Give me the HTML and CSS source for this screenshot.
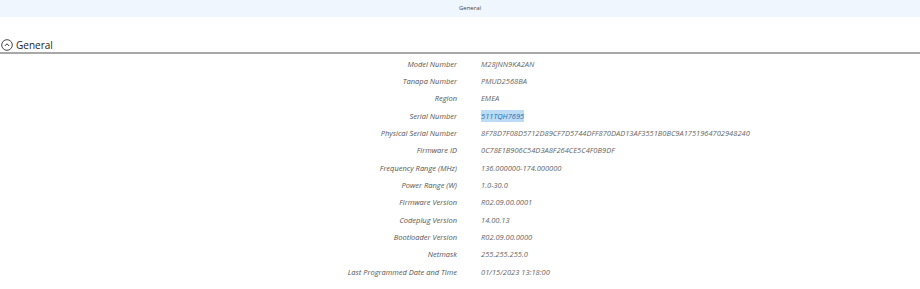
FILE: index.html
```html
<!DOCTYPE html>
<html lang="en">
<head>
    <meta charset="UTF-8">
    <title>General</title>
    <link rel="stylesheet" href="styles.css">
</head>
<body>
    <div class="tab-bar">General</div>

    <div class="section">
        <div class="section-header">
            <svg class="toggle" width="12" height="12" viewBox="0 0 12 12">
                <circle cx="6" cy="6" r="5.3" fill="none" stroke="#333" stroke-width="0.9"/>
                <path d="M3.8 7 L6 4.8 L8.2 7" fill="none" stroke="#333" stroke-width="1"/>
            </svg>
            <span>General</span>
        </div>

        <div class="info-grid">
            <div class="label">Model Number</div>
            <div class="value">M28JNN9KA2AN</div>
            <div class="label">Tanapa Number</div>
            <div class="value">PMUD2568BA</div>
            <div class="label">Region</div>
            <div class="value">EMEA</div>
            <div class="label">Serial Number</div>
            <div class="value"><span class="selected">511TQH7695</span></div>
            <div class="label">Physical Serial Number</div>
            <div class="value">8F78D7F08D5712D89CF7D5744DFF870DAD13AF3551B0BC9A1751964702948240</div>
            <div class="label">Firmware ID</div>
            <div class="value">0C78E1B906C54D3A8F264CE5C4F0B9DF</div>
            <div class="label">Frequency Range (MHz)</div>
            <div class="value">136.000000-174.000000</div>
            <div class="label">Power Range (W)</div>
            <div class="value">1.0-30.0</div>
            <div class="label">Firmware Version</div>
            <div class="value">R02.09.00.0001</div>
            <div class="label">Codeplug Version</div>
            <div class="value">14.00.13</div>
            <div class="label">Bootloader Version</div>
            <div class="value">R02.09.00.0000</div>
            <div class="label">Netmask</div>
            <div class="value">255.255.255.0</div>
            <div class="label">Last Programmed Date and Time</div>
            <div class="value">01/15/2023 13:18:00</div>
        </div>
    </div>
</body>
</html>
```

FILE: styles.css
```css
body {
    margin: 0;
    font-family: "Open Sans", "Liberation Sans", sans-serif;
    background-color: #ffffff;
    color: #333;
}
.tab-bar {
    height: 17px;
    line-height: 17px;
    background-color: #eff6fd;
    text-align: center;
    font-size: 6px;
    color: #444;
    padding-left: 20px;
}
.section {
    margin-top: 20px;
}
.section-header {
    display: flex;
    align-items: center;
    gap: 3px;
    padding-left: 1px;
    height: 15px;
    font-size: 10px;
    color: #222;
    border-bottom: 2px solid #a8a8a8;
}
.toggle {
    display: block;
}
.info-grid {
    display: grid;
    grid-template-columns: 457px 1fr;
    column-gap: 24px;
    grid-auto-rows: 17.33px;
    align-items: center;
    padding-top: 1px;
    font-size: 7.5px;
    font-style: italic;
    color: #555;
}
.label {
    text-align: right;
}
.value {
    color: #666;
    white-space: nowrap;
}
.selected {
    background-color: #bcdcf5;
    color: #2a6fb0;
    padding: 1px 0;
}
```
